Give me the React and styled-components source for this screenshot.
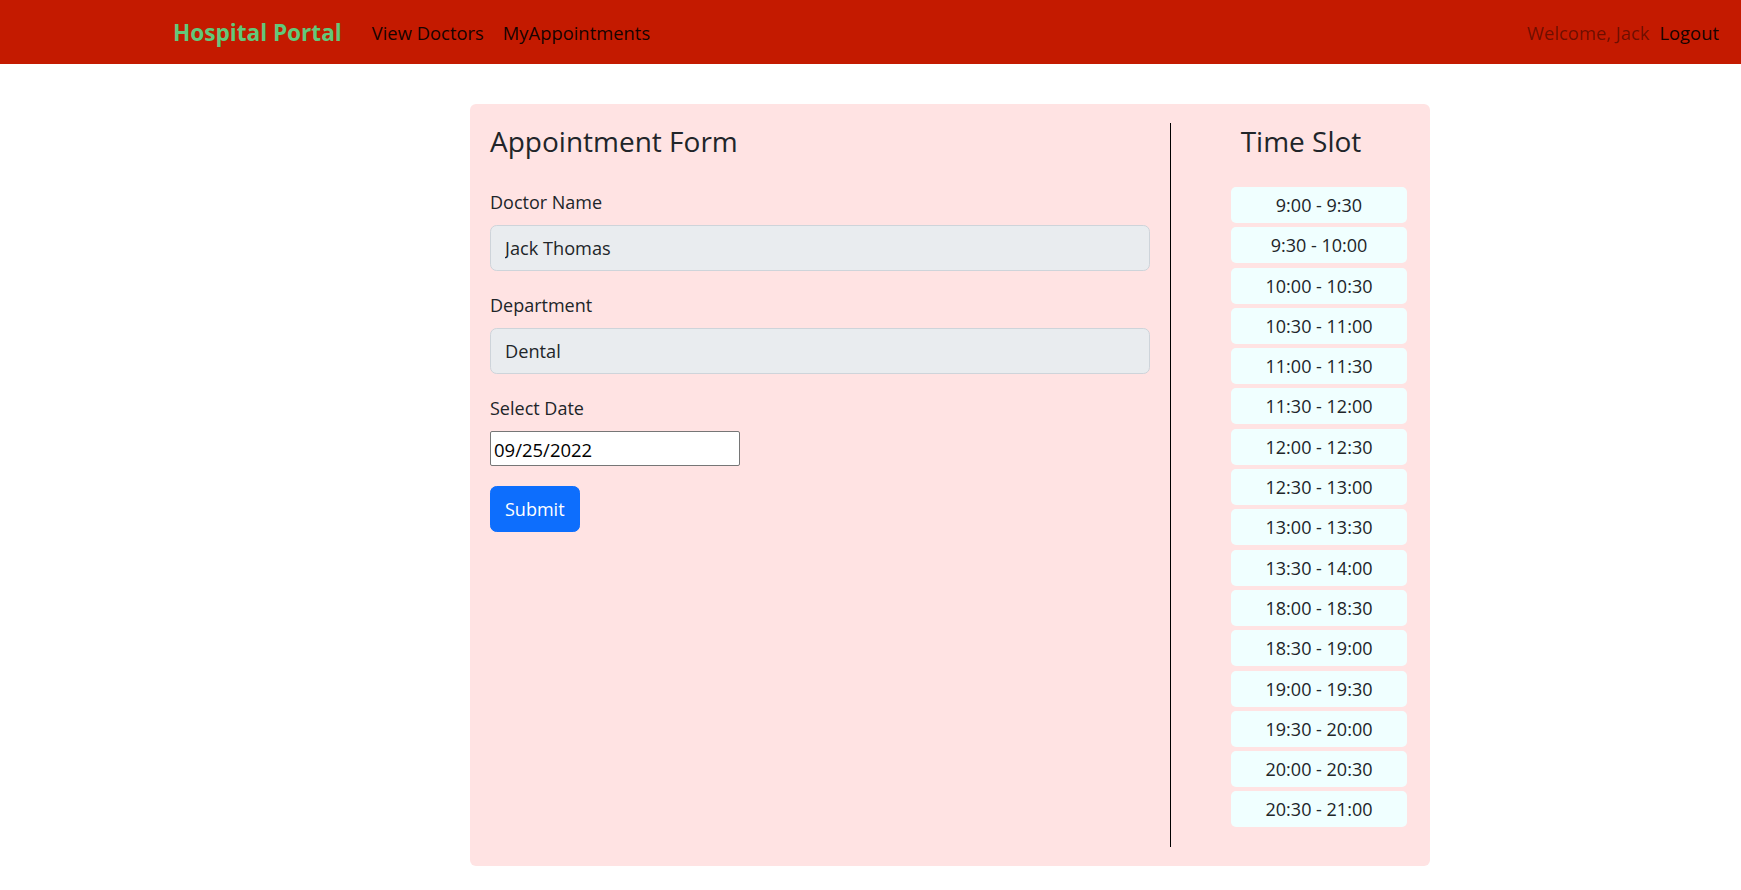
import React from "react";
import styled, { createGlobalStyle } from "styled-components";

const font = `"Segoe UI", "Open Sans", Roboto, sans-serif`;

const GlobalStyle = createGlobalStyle`
  * {
    box-sizing: border-box;
  }
  body {
    margin: 0;
    font-family: ${font};
    font-size: 18px;
    color: #212529;
    background: #ffffff;
  }
`;

const slots = [
  "9:00 - 9:30",
  "9:30 - 10:00",
  "10:00 - 10:30",
  "10:30 - 11:00",
  "11:00 - 11:30",
  "11:30 - 12:00",
  "12:00 - 12:30",
  "12:30 - 13:00",
  "13:00 - 13:30",
  "13:30 - 14:00",
  "18:00 - 18:30",
  "18:30 - 19:00",
  "19:00 - 19:30",
  "19:30 - 20:00",
  "20:00 - 20:30",
  "20:30 - 21:00",
];

const App = () => {
  return (
    <>
      <GlobalStyle />
      <Navbar>
        <Brand>Hospital Portal</Brand>
        <NavLinks>
          <NavLink>View Doctors</NavLink>
          <NavLink>MyAppointments</NavLink>
        </NavLinks>
        <NavRight>
          <Welcome>Welcome, Jack</Welcome>
          <NavLink>Logout</NavLink>
        </NavRight>
      </Navbar>
      <Page>
        <Card>
          <FormColumn>
            <Heading>Appointment Form</Heading>
            <Field>
              <Label>Doctor Name</Label>
              <Input value="Jack Thomas" disabled readOnly />
            </Field>
            <Field>
              <Label>Department</Label>
              <Input value="Dental" disabled readOnly />
            </Field>
            <Field>
              <Label>Select Date</Label>
              <DateInput value="09/25/2022" readOnly />
            </Field>
            <SubmitButton type="button">Submit</SubmitButton>
          </FormColumn>
          <SlotColumn>
            <SlotHeading>Time Slot</SlotHeading>
            <SlotList>
              {slots.map((s) => (
                <Slot key={s}>{s}</Slot>
              ))}
            </SlotList>
          </SlotColumn>
        </Card>
      </Page>
    </>
  );
};

export default App;

const Navbar = styled.nav`
  display: flex;
  align-items: center;
  height: 64px;
  padding: 0 22px 0 173px;
  background-color: #c41a00;
`;

const Brand = styled.span`
  font-size: 22.6px;
  font-weight: 700;
  color: #62c87a;
  margin-right: 30px;
  white-space: nowrap;
`;

const NavLinks = styled.div`
  display: flex;
  gap: 19px;
`;

const NavLink = styled.span`
  font-size: 18.4px;
  color: rgba(0, 0, 0, 0.9);
  white-space: nowrap;
  cursor: pointer;
`;

const NavRight = styled.div`
  display: flex;
  align-items: center;
  gap: 10px;
  margin-left: auto;
`;

const Welcome = styled.span`
  font-size: 18.4px;
  color: rgba(0, 0, 0, 0.45);
`;

const Page = styled.main`
  padding: 40px 0 24px 470px;
`;

const Card = styled.div`
  display: flex;
  width: 960px;
  padding: 19px 23px 19px 20px;
  background-color: #ffe3e3;
  border-radius: 6px;
`;

const FormColumn = styled.div`
  width: 681px;
  padding-right: 20px;
  border-right: 1px solid #000;
`;

const Heading = styled.h3`
  margin: 0 0 29px;
  font-size: 28px;
  font-weight: 400;
  line-height: 37px;
`;

const Field = styled.div`
  margin-bottom: 21px;
`;

const Label = styled.label`
  display: block;
  margin-bottom: 9px;
  line-height: 27px;
`;

const Input = styled.input`
  display: block;
  width: 100%;
  height: 46px;
  padding: 0 14px;
  font-family: ${font};
  font-size: 18.2px;
  color: #212529;
  background-color: #e9ecef;
  border: 1px solid #ced4da;
  border-radius: 6.6px;
  outline: none;
  &:disabled {
    color: #212529;
    -webkit-text-fill-color: #212529;
    opacity: 1;
  }
`;

const DateInput = styled.input`
  display: block;
  width: 250px;
  height: 35px;
  padding: 2px 3px 0;
  font-family: ${font};
  font-size: 18.5px;
  color: #000;
  background: #fff;
  border: 1px solid #767676;
  border-radius: 2px;
  outline: none;
`;

const SubmitButton = styled.button`
  height: 46px;
  margin-top: -1px;
  padding: 0 14px;
  font-family: ${font};
  font-size: 18px;
  color: #fff;
  background-color: #0d6efd;
  border: 1px solid #0d6efd;
  border-radius: 6.6px;
  cursor: pointer;
`;

const SlotColumn = styled.div`
  flex: 1;
  display: flex;
  flex-direction: column;
  padding-bottom: 20px;
`;

const SlotHeading = styled.h3`
  margin: 0 0 27px;
  padding-left: 24px;
  font-size: 28px;
  font-weight: 400;
  line-height: 37px;
  text-align: center;
`;

const SlotList = styled.div`
  display: flex;
  flex-direction: column;
  align-items: flex-end;
  gap: 4.3px;
`;

const Slot = styled.div`
  display: flex;
  align-items: center;
  justify-content: center;
  width: 176px;
  height: 36px;
  font-size: 18px;
  background-color: #f0ffff;
  border-radius: 5px;
`;
